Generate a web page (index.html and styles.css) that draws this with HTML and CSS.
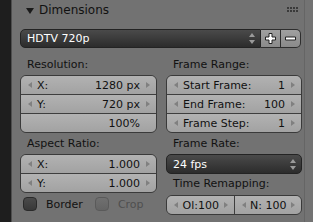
FILE: index.html
```html
<!DOCTYPE html>
<html lang="en">
<head>
  <meta charset="UTF-8" />
  <title>Dimensions</title>
  <link rel="stylesheet" href="styles.css">
</head>
<body>
<div class="app">
  <div class="side"></div>
  <div class="panel">
    <div class="head">
      <span class="tri"></span>
      <span class="title">Dimensions</span>
      <svg class="grip" width="11" height="6" viewBox="0 0 11 6">
        <g fill="#3a3a3a">
          <rect x="0" y="0" width="2" height="2"/><rect x="3" y="0" width="2" height="2"/>
          <rect x="6" y="0" width="2" height="2"/><rect x="9" y="0" width="2" height="2"/>
          <rect x="0" y="3" width="2" height="2"/><rect x="3" y="3" width="2" height="2"/>
          <rect x="6" y="3" width="2" height="2"/><rect x="9" y="3" width="2" height="2"/>
        </g>
      </svg>
    </div>

    <div class="preset-row">
      <div class="menu preset">
        <span>HDTV 720p</span>
        <svg class="updown" width="6" height="11" viewBox="0 0 6 11"><path d="M3 0L6 4H0z M3 11L6 7H0z" fill="#9a9a9a"/></svg>
      </div>
      <div class="pm">
        <div class="pm-btn"><svg width="13" height="13" viewBox="0 0 13 13"><path d="M5 1.5h3v3.5h3.5v3h-3.5v3.5h-3v-3.5h-3.5v-3h3.5z" fill="#fff" stroke="#222" stroke-width="1"/></svg></div>
        <div class="pm-btn last"><svg width="13" height="13" viewBox="0 0 13 13"><path d="M1.5 5h10v3h-10z" fill="#fff" stroke="#222" stroke-width="1"/></svg></div>
      </div>
    </div>

    <div class="cols">
      <div class="col">
        <div class="label">Resolution:</div>
        <div class="group">
          <div class="num"><span class="arr l"></span><span class="name">X:</span><span class="val">1280 px</span><span class="arr r"></span></div>
          <div class="num"><span class="arr l"></span><span class="name">Y:</span><span class="val">720 px</span><span class="arr r"></span></div>
          <div class="num slider"><span class="val">100%</span></div>
        </div>

        <div class="label gap">Aspect Ratio:</div>
        <div class="group">
          <div class="num"><span class="arr l"></span><span class="name">X:</span><span class="val">1.000</span><span class="arr r"></span></div>
          <div class="num"><span class="arr l"></span><span class="name">Y:</span><span class="val">1.000</span><span class="arr r"></span></div>
        </div>

        <div class="checks">
          <label class="check"><span class="box"></span>Border</label>
          <label class="check off"><span class="box"></span>Crop</label>
        </div>
      </div>

      <div class="col">
        <div class="label">Frame Range:</div>
        <div class="group">
          <div class="num"><span class="arr l"></span><span class="name">Start Frame:</span><span class="val">1</span><span class="arr r"></span></div>
          <div class="num"><span class="arr l"></span><span class="name">End Frame:</span><span class="val">100</span><span class="arr r"></span></div>
          <div class="num"><span class="arr l"></span><span class="name">Frame Step:</span><span class="val">1</span><span class="arr r"></span></div>
        </div>

        <div class="label gap">Frame Rate:</div>
        <div class="menu rate">
          <span>24 fps</span>
          <svg class="updown" width="6" height="11" viewBox="0 0 6 11"><path d="M3 0L6 4H0z M3 11L6 7H0z" fill="#9a9a9a"/></svg>
        </div>

        <div class="label remap">Time Remapping:</div>
        <div class="group row">
          <div class="num"><span class="arr l"></span><span class="name mid">Ol:100</span><span class="arr r"></span></div>
          <div class="num"><span class="arr l"></span><span class="name mid">N: 100</span><span class="arr r"></span></div>
        </div>
      </div>
    </div>
  </div>
  <div class="edge"></div>
</div>
</body>
</html>
```

FILE: styles.css
```css
body {
  margin: 0;
  font-family: 'DejaVu Sans', Verdana, sans-serif;
  font-size: 11px;
  color: #111;
  background: #727272;
}
.app {
  display: flex;
  width: 313px;
  height: 222px;
  overflow: hidden;
}
.side {
  width: 11px;
  background: #1e1e1e;
}
.panel {
  width: 293px;
  box-sizing: border-box;
  border-left: 1px solid #4e4e4e;
  padding: 0 3px 0 8px;
  background: #727272;
}
.edge {
  flex: 1;
  border-left: 1px solid #656565;
  background: #737373;
}

/* header */
.head {
  height: 22px;
  display: flex;
  align-items: center;
  padding-left: 6px;
  font-size: 12px;
  color: #111;
}
.tri {
  width: 0; height: 0;
  border-left: 4px solid transparent;
  border-right: 4px solid transparent;
  border-top: 6px solid #1a1a1a;
  margin-right: 5px;
  margin-top: -1px;
}
.title { flex: 1; margin-top: -2px; }
.grip { margin-right: 3px; margin-top: -3px; }

/* preset */
.preset-row {
  display: flex;
  margin-top: 7px;
  height: 19px;
}
.menu {
  display: flex;
  align-items: center;
  height: 19px;
  box-sizing: border-box;
  border: 1px solid #232323;
  border-radius: 5px;
  background: linear-gradient(#4a4a4a, #2c2c2c);
  color: #fff;
  padding: 0 5px 0 6px;
}
.menu span { flex: 1; }
.menu.rate { height: 20px; }
.preset {
  flex: 1;
  border-radius: 5px 0 0 5px;
}
.pm {
  display: flex;
}
.pm-btn {
  width: 20px;
  height: 19px;
  box-sizing: border-box;
  border: 1px solid #2e2e2e;
  border-left: none;
  background: linear-gradient(#a0a0a0, #8a8a8a);
  display: flex;
  align-items: center;
  justify-content: center;
}
.pm-btn.last { border-radius: 0 5px 5px 0; }

/* columns */
.cols {
  display: grid;
  grid-template-columns: 137px 136px;
  column-gap: 9px;
  margin-top: 7px;
}
.label {
  height: 20px;
  line-height: 20px;
  padding-left: 7px;
  color: #111;
}
.label.gap { margin-top: 1px; }
.label.remap { height: 21px; }

.group {
  border: 1px solid #3a3a3a;
  border-radius: 6px;
  overflow: hidden;
}
.num {
  display: flex;
  align-items: center;
  height: 18px;
  padding: 0 6px 0 7px;
  background: linear-gradient(#b2b2b2, #a2a2a2);
}
.num + .num { border-top: 1px solid #3e3e3e; }
.arr {
  width: 0; height: 0;
  border-top: 3px solid transparent;
  border-bottom: 3px solid transparent;
}
.arr.l { border-right: 4px solid #808080; }
.arr.r { border-left: 4px solid #808080; }
.name { flex: 1; margin-left: 5px; }
.name.mid { text-align: center; margin: 0; }
.val { margin-right: 6px; }
.slider { justify-content: flex-end; padding-right: 16px; }
.slider .val { margin: 0; }

.group.row { display: flex; }
.group.row .num { flex: 1; }
.group.row .num + .num { border-top: none; border-left: 1px solid #3e3e3e; }

/* checkboxes */
.checks {
  display: flex;
  gap: 12px;
  margin-top: 1px;
  padding-left: 3px;
}
.check {
  display: flex;
  align-items: center;
  height: 20px;
  color: #111;
}
.box {
  width: 14px;
  height: 14px;
  box-sizing: border-box;
  border: 1px solid #2a2a2a;
  border-radius: 4px;
  background: linear-gradient(#4a4a4a, #383838);
  margin-right: 9px;
}
.check.off { color: #4f4f4f; }
.check.off .box {
  border-color: #5a5a5a;
  background: linear-gradient(#707070, #646464);
}
```
